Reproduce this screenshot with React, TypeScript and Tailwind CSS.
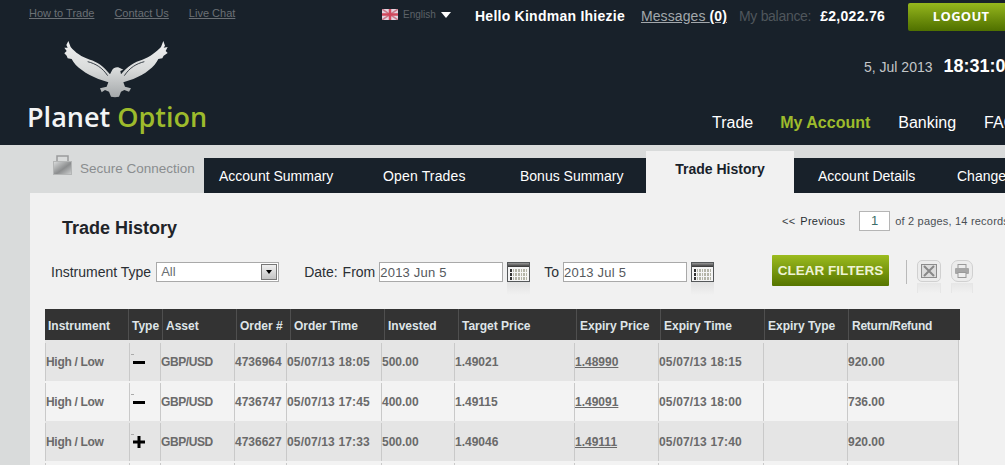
const headColumns = "grid-cols-[83px_34px_74px_54px_94px_74px_118px_84px_104px_84px_112px]";
const bodyColumns = "grid-cols-[84px_31px_74px_52px_95px_73px_120px_84px_105px_84px_111px]";

const headCells = [
  "Instrument",
  "Type",
  "Asset",
  "Order #",
  "Order Time",
  "Invested",
  "Target Price",
  "Expiry Price",
  "Expiry Time",
  "Expiry Type",
  "Return/Refund",
];

type Row = {
  type: string;
  order: string;
  time: string;
  invested: string;
  target: string;
  expiry: string;
  expiryTime: string;
  ret: string;
};

const rows: Row[] = [
  { type: "-", order: "4736964", time: "05/07/13 18:05", invested: "500.00", target: "1.49021", expiry: "1.48990", expiryTime: "05/07/13 18:15", ret: "920.00" },
  { type: "-", order: "4736747", time: "05/07/13 17:45", invested: "400.00", target: "1.49115", expiry: "1.49091", expiryTime: "05/07/13 18:00", ret: "736.00" },
  { type: "+", order: "4736627", time: "05/07/13 17:33", invested: "500.00", target: "1.49046", expiry: "1.49111", expiryTime: "05/07/13 17:40", ret: "920.00" },
];

const cell = "flex items-center border-l border-[#c9c9c9] whitespace-nowrap";

function Eagle() {
  return (
    <svg width="120" height="65" viewBox="0 0 360 195" className="ml-[26px] mt-[15px] block">
      <defs>
        <linearGradient id="eagleFill" x1="0" y1="0" x2="0" y2="1">
          <stop offset="0" stopColor="#f0f1f1" />
          <stop offset="0.5" stopColor="#d9dbdb" />
          <stop offset="1" stopColor="#a4a8aa" />
        </linearGradient>
      </defs>
      <path
        fill="url(#eagleFill)"
        d="M40 18 L47 36 C60 52 80 66 105 74 C125 80 145 92 165 118 L172 104 C176 96 190 94 196 100 L205 104 L196 108 L198 118 C215 95 240 80 262 74 C285 66 305 50 318 36 L325 18 L330 32 L326 38 L338 36 L332 48 L338 54 L326 62 L322 70 L310 72 C300 95 270 118 235 132 L205 142 L210 155 L228 160 L222 170 L208 165 L198 170 L192 185 L180 187 L168 185 L162 170 L150 165 L140 172 L135 160 L155 155 L160 142 L130 132 C95 118 60 95 50 72 L38 70 L35 62 L28 55 L35 48 L28 38 L38 38 L34 30 Z"
      />
      <path d="M98 80 C122 86 142 98 158 122" stroke="#18212a" strokeWidth="2.5" fill="none" />
      <path d="M268 80 C244 86 224 98 208 122" stroke="#18212a" strokeWidth="2.5" fill="none" />
    </svg>
  );
}

function Calendar() {
  const cells = Array.from({ length: 21 });
  return (
    <div className="w-[23px] shrink-0">
      <div className="h-[20px] border border-[#55585a] bg-[#f5f5f5]">
        <div className="h-[4px] bg-gradient-to-b from-[#999] to-[#333]" />
        <div className="grid grid-cols-7 gap-px p-[2px]">
          {cells.map((_, i) => (
            <div key={i} className={i % 7 === 0 ? "h-[3px] bg-[#333]" : "h-[3px] bg-[#b5b5a8]"} />
          ))}
        </div>
      </div>
      <div className="h-[13px] bg-gradient-to-b from-[#e2e2e2] to-[#f1f1f1]" />
    </div>
  );
}

function ExportIcons() {
  return (
    <div className="flex gap-[10px] ml-[10px]">
      <div>
        <div className="w-[24px] h-[22px] rounded-[5px] border border-[#d0d0d0] bg-[#ececec] flex items-center justify-center">
          <svg width="16" height="14" viewBox="0 0 16 14">
            <rect x="0.5" y="0.5" width="15" height="13" fill="#dcdcdc" stroke="#8c8c8c" />
            <path d="M3 2 L13 12 M13 2 L3 12" stroke="#888" strokeWidth="2" />
          </svg>
        </div>
        <div className="w-[24px] h-[10px] mt-px border-x border-[#e6e6e6] bg-gradient-to-b from-[#e6e6e6] to-[#f1f1f1]" />
      </div>
      <div>
        <div className="w-[22px] h-[22px] rounded-[7px] border border-[#d0d0d0] bg-[#ececec] flex items-center justify-center">
          <svg width="16" height="14" viewBox="0 0 16 14">
            <rect x="4" y="0.5" width="8" height="4" fill="none" stroke="#999" />
            <rect x="1" y="4" width="14" height="6" rx="1" fill="#a6a6a6" />
            <rect x="4" y="8.5" width="8" height="5" fill="#eee" stroke="#999" />
          </svg>
        </div>
        <div className="w-[22px] h-[10px] mt-px border-x border-[#e6e6e6] bg-gradient-to-b from-[#e6e6e6] to-[#f1f1f1]" />
      </div>
    </div>
  );
}

function Tab({ label, className }: { label: string; className: string }) {
  return (
    <div className={`h-[35px] shrink-0 flex items-center pt-[2px] bg-[#18212a] text-white text-[14px] ${className}`}>
      {label}
    </div>
  );
}

export default function App() {
  return (
    <div className="w-[1005px] h-[465px] overflow-hidden bg-[#d9dbdb] font-['Liberation_Sans',Arial,sans-serif]">
      {/* Header */}
      <header className="h-[145px] bg-[#18212a] flex">
        <div className="w-[340px] shrink-0 pl-[29px] pt-[7px]">
          <div className="flex gap-[20px] text-[11px] leading-[13px] text-[#6b7075]">
            <a className="underline">How to Trade</a>
            <a className="underline">Contact Us</a>
            <a className="underline">Live Chat</a>
          </div>
          <Eagle />
          <div className="-ml-[2px] text-[27px] leading-[34px] font-semibold font-['Open_Sans',sans-serif] text-[#f2f4f5] whitespace-nowrap">
            Planet <span className="text-[#9dbb2c]">Option</span>
          </div>
        </div>

        <div className="flex-1 min-w-0 overflow-hidden">
          <div className="flex items-start pt-[3px] pl-[42px] whitespace-nowrap">
            <div className="flex items-center gap-[5px] mt-[4px] w-[93px] shrink-0 text-[10px] text-[#5c6268]">
              <svg width="16" height="11" viewBox="0 0 16 11" className="shrink-0">
                <rect width="16" height="11" fill="#e4d3df" />
                <path d="M0 0 L16 11 M16 0 L0 11" stroke="#c97a8a" strokeWidth="1.5" />
                <path d="M8 0 V11 M0 5.5 H16" stroke="#d0475c" strokeWidth="2.5" />
              </svg>
              English
              <span className="w-0 h-0 border-x-[5px] border-x-transparent border-t-[6px] border-t-white" />
            </div>
            <span className="mt-[3px] shrink-0 text-[14px] tracking-[0.25px] font-bold text-white">Hello Kindman Ihiezie</span>
            <span className="mt-[3px] ml-[16px] shrink-0 text-[14px] tracking-[0.1px] text-[#a3a8ac] underline">
              Messages <b className="text-white">(0)</b>
            </span>
            <span className="mt-[3px] ml-[12px] shrink-0 text-[14px] tracking-[-0.3px] text-[#4f565c]">My balance:</span>
            <span className="mt-[3px] ml-[9px] shrink-0 text-[14px] tracking-[0.3px] font-bold text-white">£2,022.76</span>
            <button className="ml-[23px] w-[106px] h-[28px] shrink-0 rounded-[2px] bg-gradient-to-b from-[#96b71d] to-[#4f7000] text-white text-[13px] tracking-[0.3px] font-bold font-['Open_Sans',sans-serif]">
              LOGOUT
            </button>
          </div>
          <div className="flex items-baseline justify-start pl-[524px] mt-[22px] whitespace-nowrap">
            <span className="text-[14px] text-[#c3c6c8]">5, Jul 2013</span>
            <span className="ml-[11px] text-[18px] font-bold text-white">18:31:02</span>
          </div>
          <nav className="flex items-center pl-[372px] mt-[31px] text-[16px] text-white whitespace-nowrap">
            <a>Trade</a>
            <a className="ml-[27px] font-bold text-[#9dbb2c]">My Account</a>
            <a className="ml-[28px]">Banking</a>
            <a className="ml-[28px]">FAQ</a>
          </nav>
        </div>
      </header>

      {/* Tabs */}
      <div className="flex items-end h-[48px] pl-[53px] whitespace-nowrap">
        <div className="w-[151px] shrink-0 self-start flex items-start pt-[9px]">
          <svg width="19" height="21" viewBox="0 0 19 21" className="shrink-0">
            <defs>
              <linearGradient id="lockFill" x1="0" y1="0" x2="1" y2="1">
                <stop offset="0" stopColor="#dcdede" />
                <stop offset="0.55" stopColor="#8b8d8e" />
                <stop offset="1" stopColor="#cfd1d1" />
              </linearGradient>
            </defs>
            <path d="M4 8 V2 H15 V8" fill="none" stroke="#9a9c9d" strokeWidth="1.5" />
            <rect x="0.5" y="7.5" width="18" height="13" fill="url(#lockFill)" stroke="#b4b6b6" />
          </svg>
          <span className="ml-[8px] mt-[7px] text-[13.5px] leading-[16px] text-[#8a8d8f]">Secure Connection</span>
        </div>
        <Tab label="Account Summary" className="w-[155px] pl-[15px]" />
        <Tab label="Open Trades" className="w-[132px] pl-[24px] tracking-[0.15px]" />
        <Tab label="Bonus Summary" className="w-[155px] pl-[29px]" />
        <div className="h-[42px] w-[148px] shrink-0 flex justify-center pt-[10px] bg-[#f1f1f1] text-[14px] leading-[16px] text-[#18212a] font-bold">
          Trade History
        </div>
        <Tab label="Account Details" className="w-[139px] pl-[24px]" />
        <Tab label="Change Password" className="w-[140px] pl-[24px]" />
      </div>

      {/* Panel */}
      <main className="ml-[30px] h-[272px] bg-[#f1f1f1]">
        <div className="flex items-start h-[62px]">
          <h1 className="ml-[32px] mt-[24px] text-[18px] leading-[22px] font-bold text-[#1f2429]">Trade History</h1>
          <div className="ml-auto -mr-[30px] w-[253px] shrink-0 flex items-center mt-[18px] text-[11px] tracking-[0.25px] whitespace-nowrap text-[#2a2f34]">
            <span className="text-[#3a3f44]">&lt;&lt;</span>
            <span className="ml-[5px]">Previous</span>
            <span className="ml-[14px] w-[31px] h-[20px] shrink-0 border border-[#b5b5b5] bg-white flex items-center justify-center text-[13px] text-[#3b6f6a]">1</span>
            <span className="ml-[5px] text-[#4a4f54] tracking-[0.2px]">of 2 pages, 14 records</span>
          </div>
        </div>

        <div className="flex items-start h-[54px] pl-[21px] whitespace-nowrap text-[14px] text-[#2a2f34]">
          <span className="mt-[9px] leading-[16px]">Instrument Type</span>
          <div className="ml-[5px] mt-[7px] w-[123px] h-[20px] border border-[#a9a9a9] bg-white flex items-center pl-[4px] text-[#6a6e72] text-[13px]">
            All
            <span className="ml-auto mr-px w-[16px] h-[16px] border border-[#777] bg-gradient-to-b from-[#f0f0f0] to-[#c4c4c4] flex items-center justify-center">
              <span className="w-0 h-0 border-x-[3px] border-x-transparent border-t-[4px] border-t-black" />
            </span>
          </div>
          <span className="ml-[25px] mt-[9px] leading-[16px]">Date:</span>
          <span className="ml-[5px] mt-[9px] leading-[16px]">From</span>
          <input
            readOnly
            value="2013 Jun 5"
            className="ml-[4px] mt-[7px] w-[124px] h-[20px] border border-[#a9a9a9] bg-white pl-0 text-[13px] tracking-[0.2px] text-[#55595d] outline-none"
          />
          <div className="ml-[4px] mt-[7px]">
            <Calendar />
          </div>
          <span className="ml-[14px] mt-[9px] leading-[16px]">To</span>
          <input
            readOnly
            value="2013 Jul 5"
            className="ml-[4px] mt-[7px] w-[124px] h-[20px] border border-[#a9a9a9] bg-white pl-0 text-[13px] tracking-[0.2px] text-[#55595d] outline-none"
          />
          <div className="ml-[4px] mt-[7px]">
            <Calendar />
          </div>
          <button className="ml-[58px] w-[117px] h-[31px] shrink-0 rounded-[1px] pt-px bg-gradient-to-b from-[#9cbc1e] to-[#567500] text-[#eef3d4] text-[13.5px] font-bold">
            CLEAR FILTERS
          </button>
          <div className="ml-[17px] mt-[5px] w-px h-[24px] bg-[#b9b9b9]" />
          <div className="mt-[5px]">
            <ExportIcons />
          </div>
        </div>

        {/* Table */}
        <div className="ml-[15px] w-[915px] text-[12px] font-bold">
          <div className={`grid ${headColumns} h-[31px] bg-[#333333] text-[#dfe5e8]`}>
            {headCells.map((label, i) => (
              <div
                key={label}
                className={`flex items-center pl-[3px] pt-[2px] whitespace-nowrap h-[31px] ${i > 0 ? "border-l border-[#4f4f4f]" : ""} ${i === 10 ? "tracking-[-0.25px]" : ""}`}
              >
                {label}
              </div>
            ))}
          </div>
          {[...rows, null].map((row, i) => (
            <div
              key={i}
              className={`grid ${bodyColumns} w-[914px] border-r border-[#c9c9c9] text-[#6a6a6a] ${i === 0 ? "h-[41px] pt-[3px]" : "h-[40px] pt-[2px]"} ${i % 2 === 0 ? "bg-[#e5e5e5]" : "bg-[#f3f3f3]"}`}
            >
              <div className={`${cell} tracking-[-0.3px]`}>{row && "High / Low"}</div>
              <div className={`${cell} relative pl-[3px]`}>
                {row && <span className="absolute left-[1px] top-[11px] w-[3px] h-px bg-[#aaaaaa]" />}
                {row?.type === "-" && <span className="block w-[12px] h-[3px] bg-black" />}
                {row?.type === "+" && (
                  <svg width="12" height="12" viewBox="0 0 12 12">
                    <path d="M0 4.5 H12 V7.5 H0 Z M4.5 0 H7.5 V12 H4.5 Z" fill="#000" />
                  </svg>
                )}
              </div>
              <div className={`${cell} tracking-[-0.4px]`}>{row && "GBP/USD"}</div>
              <div className={cell}>{row?.order}</div>
              <div className={`${cell} tracking-[0.15px]`}>{row?.time}</div>
              <div className={cell}>{row?.invested}</div>
              <div className={cell}>{row?.target}</div>
              <div className={`${cell} underline`}>{row?.expiry}</div>
              <div className={`${cell} tracking-[0.15px]`}>{row?.expiryTime}</div>
              <div className={cell} />
              <div className={cell}>{row?.ret}</div>
            </div>
          ))}
        </div>
      </main>
    </div>
  );
}
